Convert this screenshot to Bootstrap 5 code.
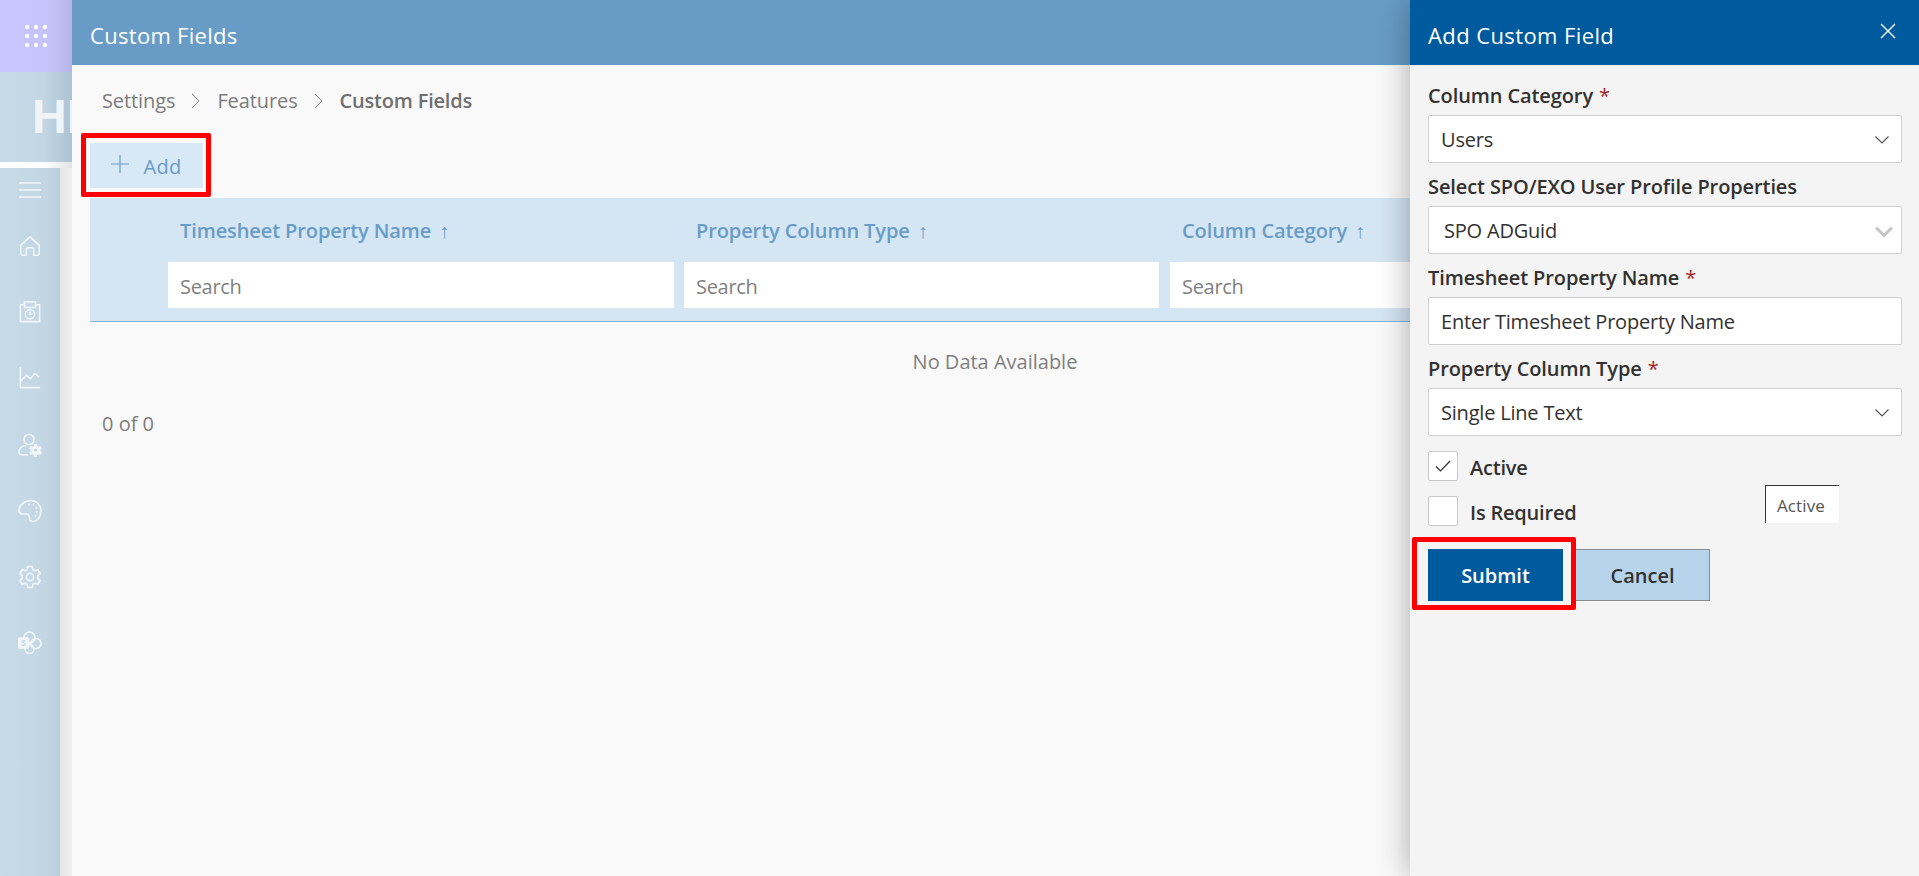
<!DOCTYPE html>
<html lang="en">
<head>
    <meta charset="UTF-8">
    <title>Custom Fields</title>
    <meta name="viewport" content="width=device-width, initial-scale=1">
    <link href="https://cdn.jsdelivr.net/npm/bootstrap@5.3.3/dist/css/bootstrap.min.css" rel="stylesheet">
    <style>
        html, body { height: 100%; }
        body {
            font-family: "Open Sans", "Noto Sans", sans-serif;
            background: #f9f9f9;
            overflow: hidden;
            position: relative;
        }
        .app-rail { width: 72px; }
        .waffle-tile {
            height: 72px;
            background: linear-gradient(90deg, #c9c6ff 0%, #c6c3fb 70%, #b6b4e6 100%);
        }
        .logo-tile {
            height: 90px;
            background: linear-gradient(90deg, #c6dbe8 0%, #c2d6e4 60%, #adc2d4 100%);
            overflow: hidden;
            padding-left: 32px;
            font: 700 48px/90px "Liberation Sans", sans-serif;
            color: #f1f4f7;
            white-space: nowrap;
        }
        .logo-gap { height: 6px; background: linear-gradient(90deg, #fff 0%, #fff 60%, #e4e4e4 100%); }
        .rail-lower { background: linear-gradient(90deg, #c6dae8 0, #c3d6e4 45px, #bccfdf 60px, #e6e6e6 60px, #efefef 72px); }
        .rail-icons { width: 60px; padding-top: 9px; }
        .rail-icon { height: 66.2px; }
        .rail-icon svg { fill: none; stroke: #f1f6fa; stroke-width: 1.7; }
        .rail-burger { height: 26px; margin-bottom: 10px; }

        .page-title {
            height: 65px;
            padding: 5px 0 0 18px;
            background: #689cc6;
            color: #fff;
            font-size: 22px;
            letter-spacing: .3px;
        }
        .crumbs { height: 70px; padding: 2px 0 0 30px; font-size: 20px; letter-spacing: -.1px; color: #7c7c7c; }
        .crumbs svg { margin: 0 16px; fill: none; stroke: #8a8a8a; stroke-width: 1; }
        .crumbs b { font-weight: 600; color: #6f6f6f; letter-spacing: -.2px; }
        .add-row { height: 63px; padding: 8px 0 0 18px; }
        .add-btn {
            position: relative;
            width: 113px;
            height: 45px;
            padding-top: 2px;
            background: #d7e8f7;
            color: #689cc6;
            font-size: 20px;
            letter-spacing: .3px;
        }
        .add-btn svg { stroke: #689cc6; stroke-width: 1.2; margin-right: 14px; margin-top: -6px; }
        .red-add { position: absolute; inset: -10px -8px -9px -9px; border: 5px solid #f00; border-radius: 2px; }
        .grid-head {
            margin-left: 18px;
            height: 124px;
            padding-left: 78px;
            background: #d4e5f3;
            border-bottom: 1px solid #7fb2dd;
        }
        .grid-col { flex: none; }
        .grid-col-a { width: 506px; margin-right: 10px; }
        .grid-col-b { width: 475px; margin-right: 11px; }
        .grid-col-c { width: 300px; }
        .col-name {
            height: 64px;
            padding: 21px 0 0 12px;
            color: #689cc6;
            font-size: 20px;
            font-weight: 600;
            letter-spacing: -.1px;
            line-height: 24px;
            white-space: nowrap;
        }
        .col-name span { font-weight: 400; margin-left: 3px; }
        .search-box {
            display: block;
            width: 100%;
            height: 46px;
            padding: 2px 12px 0;
            border: 0;
            background: #fff;
            font-size: 20px;
            letter-spacing: -.3px;
        }
        .search-box::placeholder { color: #7f7f7f; opacity: 1; }
        .no-data { margin: 27px 0 0 18px; height: 26px; line-height: 26px; color: #7f7f7f; font-size: 20px; padding-left: 2px; width: 1808px; }
        .page-count { margin: 36px 0 0 30px; color: #7c7c7c; font-size: 20px; line-height: 26px; }

        .side-panel {
            position: absolute;
            top: 0;
            right: 0;
            bottom: 0;
            width: 509px;
            background: #f4f4f4;
            box-shadow: 0 0 30px rgba(0, 0, 0, .33);
            color: #323130;
        }
        .panel-top {
            height: 65px;
            background: #005a9e;
            color: #fff;
            padding: 0 23px 0 18px;
            font-size: 22px;
            letter-spacing: .4px;
        }
        .panel-title { padding-top: 5px; }
        .panel-close { margin-top: -3px; }
        .panel-form { padding: 0 17px 0 18px; }
        .field-label {
            display: block;
            height: 26px;
            font-size: 20px;
            font-weight: 600;
            letter-spacing: -.1px;
            line-height: 26px;
            white-space: nowrap;
        }
        .req-star { color: #a4262c; font-weight: 400; margin-left: 1px; }
        .field-first { margin-top: 18px; margin-bottom: 6px; }
        .field-next { margin-top: 11px; margin-bottom: 6px; }
        .field-box {
            height: 48px;
            padding: 2px 12px 0;
            background: #fff;
            border: 1px solid #d0d0d0;
            border-radius: 2px;
            font-size: 20px;
            letter-spacing: -.2px;
            color: #323130;
        }
        .field-box svg { fill: none; stroke: #555; stroke-width: 1.2; }
        .field-dim { padding-left: 15px; padding-right: 8px; }
        .field-dim svg { stroke: #c4c4c4; stroke-width: 3; }
        .check-row { height: 30px; font-size: 20px; font-weight: 600; letter-spacing: -.2px; }
        .check-text { padding-top: 3px; }
        .check-tile {
            width: 30px;
            height: 30px;
            margin-right: 12px;
            background: #fff;
            border: 1px solid #c8c8c8;
            border-radius: 2px;
        }
        .check-tile svg { fill: none; stroke: #323130; stroke-width: 1.2; }
        .check-first { margin-top: 15px; }
        .check-second { margin-top: 15px; }
        .tip-box {
            position: absolute;
            left: 355px;
            top: 485px;
            width: 74px;
            height: 38px;
            padding: 8px 0 0 11px;
            background: #fff;
            border-top: 1px solid #333;
            border-left: 1px solid #333;
            font-size: 17px;
            letter-spacing: .1px;
            line-height: 24px;
            color: #555;
        }
        .form-btns { margin-top: 23px; gap: 12px; }
        .act-btn {
            position: relative;
            width: 135px;
            height: 52px;
            padding-top: 8px;
            border-radius: 0;
            font-size: 20px;
            font-weight: 600;
        }
        .act-submit, .act-submit:hover { background: #005a9e; color: #fff; border: 0; }
        .act-cancel, .act-cancel:hover { background: #b6d4ec; color: #323130; border: 1px solid #8a8a8a; }
        .red-submit { position: absolute; inset: -12px -13px -9px -16px; border: 5px solid #f00; border-radius: 2px; z-index: 2; pointer-events: none; }
    </style>
</head>
<body class="d-flex">
<div class="app-rail d-flex flex-column flex-shrink-0 h-100">
    <div class="waffle-tile d-flex align-items-center justify-content-center">
        <svg width="24" height="24" viewBox="0 0 24 24" fill="#fff">
            <circle cx="3" cy="3" r="2.2"/><circle cx="12" cy="3" r="2.2"/><circle cx="21" cy="3" r="2.2"/>
            <circle cx="3" cy="12" r="2.2"/><circle cx="12" cy="12" r="2.2"/><circle cx="21" cy="12" r="2.2"/>
            <circle cx="3" cy="21" r="2.2"/><circle cx="12" cy="21" r="2.2"/><circle cx="21" cy="21" r="2.2"/>
        </svg>
    </div>
    <div class="logo-tile">HI</div>
    <div class="logo-gap"></div>
    <div class="rail-lower flex-grow-1">
        <div class="rail-icons">
            <div class="rail-burger d-flex align-items-center justify-content-center">
                <svg width="22" height="16" viewBox="0 0 22 16" fill="none" stroke="#f1f6fa" stroke-width="1.4">
                    <path d="M0 1h22M0 8h22M0 15h22"/>
                </svg>
            </div>
            <div class="rail-icon d-flex align-items-center justify-content-center">
                <svg width="22" height="22" viewBox="0 0 24 24">
                    <path d="M2 11 12 2l10 9v9a2 2 0 0 1-2 2h-4v-6a2 2 0 0 0-2-2h-4a2 2 0 0 0-2 2v6H4a2 2 0 0 1-2-2z" stroke-linejoin="round"/>
                </svg>
            </div>
            <div class="rail-icon d-flex align-items-center justify-content-center">
                <svg width="22" height="22" viewBox="0 0 24 24">
                    <path d="M6 4H1.500v18.500h21V4H18"/>
                    <rect x="6" y="1" width="12" height="6"/>
                    <circle cx="12" cy="14.500" r="5"/>
                    <path d="M12 11.500v3h2.500"/>
                </svg>
            </div>
            <div class="rail-icon d-flex align-items-center justify-content-center">
                <svg width="22" height="22" viewBox="0 0 24 24">
                    <path d="M1.500 0v22.500H23"/>
                    <path d="M2 15l6-6 4.500 4 4.500-6 5 4"/>
                </svg>
            </div>
            <div class="rail-icon d-flex align-items-center justify-content-center">
                <svg width="24" height="24" viewBox="0 0 24 24">
                    <circle cx="11" cy="6.500" r="5"/>
                    <path d="M8 12.500C4 13 1 15.500 1 18.500c0 2.200 1.700 3.500 4 3.500h5"/>
                    <path fill="#f1f6fa" stroke="none" fill-rule="evenodd" d="M16.200 11h2.600l.4 2 1.500.8 1.900-.7 1.300 2.300-1.500 1.300v1.600l1.500 1.300-1.300 2.300-1.900-.7-1.500.8-.4 2h-2.600l-.4-2-1.500-.8-1.900.7-1.300-2.300 1.500-1.300v-1.600L11.100 15.400l1.300-2.300 1.900.7 1.500-.8zM17.500 15.500a1.500 1.500 0 1 0 0 3 1.500 1.500 0 0 0 0-3z"/>
                </svg>
            </div>
            <div class="rail-icon d-flex align-items-center justify-content-center">
                <svg width="24" height="24" viewBox="0 0 24 24">
                    <path d="M13 1.500c5.500 0 10 4.500 10 10.500 0 6-4 10.500-8 10.500-2.500 0-3.500-1.700-3.500-3.500s-.5-4-3-4H5c-2.500 0-4-1.500-4-3.500C1 6.500 6.500 1.500 13 1.500z"/>
                    <path d="M11 5.500v.01M15.500 5.500v.01M18.500 9v.01M19 13v.01M17.500 17v.01" stroke-width="1.800" stroke-linecap="round"/>
                </svg>
            </div>
            <div class="rail-icon d-flex align-items-center justify-content-center">
                <svg width="24" height="24" viewBox="0 0 24 24">
                    <path d="M9.800 1.500h4.400l.6 3 2.200 1.200 2.900-1 2.200 3.800-2.300 2a8 8 0 0 1 0 3l2.300 2-2.200 3.800-2.900-1-2.200 1.200-.6 3H9.800l-.6-3L7 18.300l-2.900 1-2.200-3.800 2.300-2a8 8 0 0 1 0-3l-2.300-2 2.200-3.800 2.900 1 2.200-1.200z" stroke-linejoin="round"/>
                    <circle cx="12" cy="12" r="3.600"/>
                </svg>
            </div>
            <div class="rail-icon d-flex align-items-center justify-content-center">
                <svg width="24" height="24" viewBox="0 0 24 24">
                    <circle cx="11.500" cy="6.500" r="5.500"/>
                    <circle cx="18" cy="12.500" r="5"/>
                    <circle cx="11.500" cy="18" r="4.500"/>
                    <rect x="0.500" y="7" width="10" height="10" rx="1" fill="#f1f6fa"/>
                    <text x="5.500" y="15" text-anchor="middle" font-size="8.500" font-weight="700" font-family="Open Sans, sans-serif" fill="#c3d6e4" stroke="none">S</text>
                </svg>
            </div>
        </div>
    </div>
</div>

<div class="flex-grow-1 overflow-hidden">
    <div class="page-title d-flex align-items-center">Custom Fields</div>
    <div class="crumbs d-flex align-items-center">
        Settings
        <svg width="10" height="16" viewBox="0 0 10 16"><path d="M1 1l7 7-7 7"/></svg>
        Features
        <svg width="10" height="16" viewBox="0 0 10 16"><path d="M1 1l7 7-7 7"/></svg>
        <b>Custom Fields</b>
    </div>
    <div class="add-row">
        <div class="add-btn d-flex align-items-center justify-content-center">
            <svg width="18" height="18" viewBox="0 0 18 18" fill="none"><path d="M9 0v18M0 9h18"/></svg>
            Add
            <div class="red-add"></div>
        </div>
    </div>
    <div class="grid-head d-flex">
        <div class="grid-col grid-col-a">
            <div class="col-name">Timesheet Property Name <span>↑</span></div>
            <input class="search-box" type="text" placeholder="Search">
        </div>
        <div class="grid-col grid-col-b">
            <div class="col-name">Property Column Type <span>↑</span></div>
            <input class="search-box" type="text" placeholder="Search">
        </div>
        <div class="grid-col grid-col-c">
            <div class="col-name">Column Category <span>↑</span></div>
            <input class="search-box" type="text" placeholder="Search">
        </div>
    </div>
    <div class="no-data text-center">No Data Available</div>
    <div class="page-count">0 of 0</div>
</div>

<div class="side-panel">
    <div class="panel-top d-flex align-items-center justify-content-between">
        <span class="panel-title">Add Custom Field</span>
        <svg class="panel-close" width="16" height="16" viewBox="0 0 16 16" fill="none" stroke="#fff" stroke-width="1.400"><path d="M1 1l14 14M15 1 1 15"/></svg>
    </div>
    <div class="panel-form">
        <label class="field-label field-first">Column Category <span class="req-star">*</span></label>
        <div class="field-box d-flex align-items-center justify-content-between">
            Users
            <svg width="14" height="8" viewBox="0 0 14 8"><path d="M.5.5 7 7 13.500.5"/></svg>
        </div>
        <label class="field-label field-next">Select SPO/EXO User Profile Properties</label>
        <div class="field-box field-dim d-flex align-items-center justify-content-between">
            SPO ADGuid
            <svg width="18" height="11" viewBox="0 0 18 11"><path d="M1 1.500l8 8 8-8"/></svg>
        </div>
        <label class="field-label field-next">Timesheet Property Name <span class="req-star">*</span></label>
        <div class="field-box d-flex align-items-center">Enter Timesheet Property Name</div>
        <label class="field-label field-next">Property Column Type <span class="req-star">*</span></label>
        <div class="field-box d-flex align-items-center justify-content-between">
            Single Line Text
            <svg width="14" height="8" viewBox="0 0 14 8"><path d="M.5.5 7 7 13.500.5"/></svg>
        </div>
        <div class="check-row check-first d-flex align-items-center">
            <div class="check-tile d-flex align-items-center justify-content-center">
                <svg width="16" height="12" viewBox="0 0 16 12"><path d="M1 6.500l4.500 4.500L15 1"/></svg>
            </div>
            <span class="check-text">Active</span>
        </div>
        <div class="check-row check-second d-flex align-items-center">
            <div class="check-tile"></div>
            <span class="check-text">Is Required</span>
        </div>
        <div class="form-btns d-flex">
            <button class="btn act-btn act-submit" type="button">Submit<span class="red-submit"></span></button>
            <button class="btn act-btn act-cancel" type="button">Cancel</button>
        </div>
    </div>
    <div class="tip-box">Active</div>
</div>
</body>
</html>
